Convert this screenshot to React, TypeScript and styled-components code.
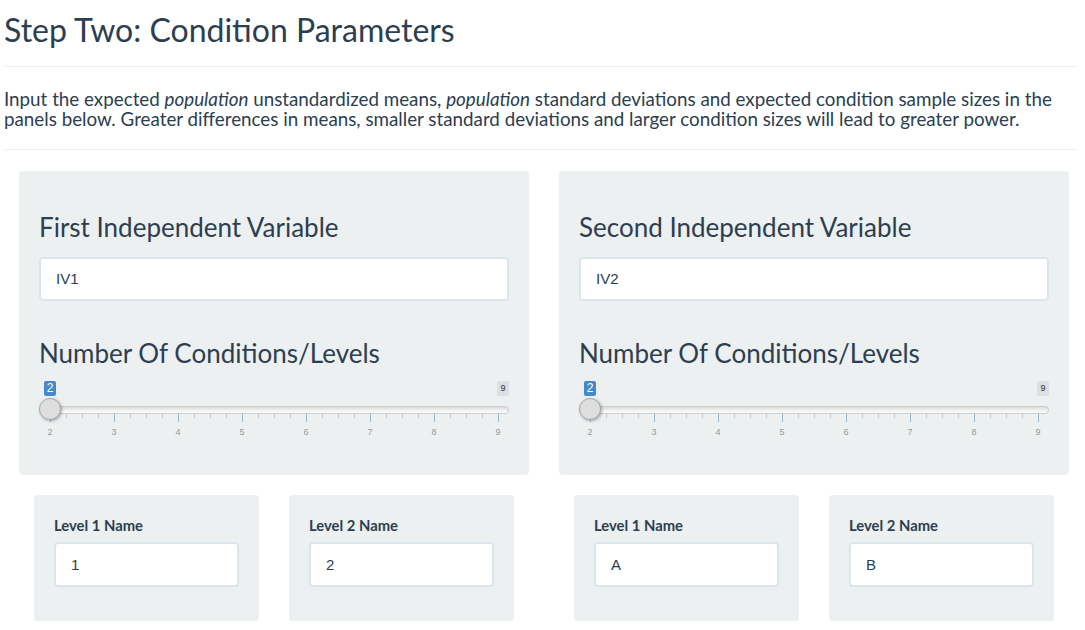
import React from 'react';
import styled, { createGlobalStyle } from 'styled-components';

const GlobalStyle = createGlobalStyle`
  html, body {
    margin: 0;
    padding: 0;
    background: #ffffff;
    color: #2c3e50;
    font-family: Lato, "Open Sans", sans-serif;
  }
`;

const Page = styled.div`
  padding: 0 4px;
  width: 1081px;
  box-sizing: border-box;
`;

const Title = styled.h2`
  margin: 0;
  padding-top: 12px;
  font-size: 32px;
  font-weight: 400;
  line-height: 1.1;
`;

const Rule = styled.hr<{ $top: number }>`
  margin: ${(p) => p.$top}px 0 0;
  border: 0;
  border-top: 1px solid #eeeeee;
`;

const Intro = styled.p`
  margin: 22px 0 0;
  font-size: 18.8px;
  line-height: 20px;
`;

const Columns = styled.div`
  display: grid;
  grid-template-columns: 510px 510px;
  gap: 30px;
  margin: 21px 0 0 15px;
`;

const Column = styled.div`
  display: flex;
  flex-direction: column;
`;

const Well = styled.div`
  background: #ecf0f1;
  border-radius: 4px;
  padding: 42px 20px 35px;
  height: 304px;
  box-sizing: border-box;
`;

const PanelHeading = styled.h3<{ $top?: number }>`
  margin: ${(p) => p.$top ?? 0}px 0 0;
  font-size: 26px;
  font-weight: 400;
  line-height: 1.1;
`;

const TextInput = styled.input<{ $height: number }>`
  display: block;
  width: 100%;
  height: ${(p) => p.$height}px;
  box-sizing: border-box;
  margin-top: 15px;
  padding: 0 15px;
  border: 2px solid #dce4ec;
  border-radius: 4px;
  background: #ffffff;
  color: #2c3e50;
  font-family: "Liberation Sans", Arial, sans-serif;
  font-size: 15px;
  outline: none;
`;

const Slider = styled.div`
  position: relative;
  height: 60px;
  margin-top: 14px;
`;

const Badge = styled.span<{ $max?: boolean }>`
  position: absolute;
  top: 0;
  ${(p) => (p.$max ? 'right: 0;' : 'left: 5px;')}
  width: 12px;
  height: 15px;
  border-radius: 2px;
  background: ${(p) => (p.$max ? '#dcdfe3' : '#428bca')};
  color: ${(p) => (p.$max ? '#333333' : '#ffffff')};
  font-family: "Liberation Sans", Arial, sans-serif;
  font-size: ${(p) => (p.$max ? '9px' : '12px')};
  line-height: 15px;
  text-align: center;
`;

const Track = styled.div`
  position: absolute;
  top: 25px;
  left: 0;
  right: 0;
  height: 8px;
  box-sizing: border-box;
  border: 1px solid #cccccc;
  border-radius: 4px;
  background: linear-gradient(to bottom, #dddddd, #ffffff);
`;

const Handle = styled.div`
  position: absolute;
  top: 17px;
  left: 0;
  width: 22px;
  height: 22px;
  box-sizing: border-box;
  border-radius: 50%;
  border: 1px solid #aaaaaa;
  background: #dedede;
  box-shadow: 1px 1px 3px rgba(0, 0, 0, 0.3);
`;

const Tick = styled.span<{ $major: boolean }>`
  position: absolute;
  top: 33px;
  width: 1px;
  height: ${(p) => (p.$major ? 8 : 4)}px;
  background: ${(p) => (p.$major ? '#9fb6cc' : '#c7c7c7')};
`;

const TickLabel = styled.span`
  position: absolute;
  top: 45px;
  width: 20px;
  margin-left: -10px;
  text-align: center;
  color: #999999;
  font-family: "Liberation Sans", Arial, sans-serif;
  font-size: 9px;
  line-height: 12px;
`;

const LevelRow = styled.div`
  display: grid;
  grid-template-columns: 225px 225px;
  gap: 30px;
  padding: 0 15px;
  margin-top: 20px;
`;

const SmallWell = styled.div`
  background: #ecf0f1;
  border-radius: 4px;
  padding: 21px 20px 35px;
  height: 126px;
  box-sizing: border-box;
`;

const FieldLabel = styled.label`
  display: block;
  font-size: 14.8px;
  font-weight: 700;
  line-height: 18px;
`;

const LevelInput = styled(TextInput)`
  margin-top: 8px;
`;

const values = [2, 3, 4, 5, 6, 7, 8, 9];
const START = 10.5;
const STEP = 64;

const RangeSlider = () => {
  const ticks: { x: number; major: boolean }[] = [];
  values.forEach((_, i) => {
    ticks.push({ x: START + i * STEP, major: true });
    if (i < values.length - 1) {
      for (let m = 1; m < 4; m++) ticks.push({ x: START + i * STEP + m * 16, major: false });
    }
  });
  return (
    <Slider>
      <Badge>2</Badge>
      <Badge $max>9</Badge>
      <Track />
      {ticks.map((t, i) => (
        <Tick key={i} $major={t.major} style={{ left: t.x }} />
      ))}
      {values.map((v, i) => (
        <TickLabel key={v} style={{ left: START + i * STEP + 0.5 }}>
          {v}
        </TickLabel>
      ))}
      <Handle />
    </Slider>
  );
};

const IVPanel = ({ title, name, levels }: { title: string; name: string; levels: string[] }) => (
  <Column>
    <Well>
      <PanelHeading>{title}</PanelHeading>
      <TextInput $height={44} defaultValue={name} />
      <PanelHeading $top={38}>Number Of Conditions/Levels</PanelHeading>
      <RangeSlider />
    </Well>
    <LevelRow>
      {levels.map((lv, i) => (
        <SmallWell key={i}>
          <FieldLabel>Level {i + 1} Name</FieldLabel>
          <LevelInput $height={45} defaultValue={lv} />
        </SmallWell>
      ))}
    </LevelRow>
  </Column>
);

export default function App() {
  return (
    <>
      <GlobalStyle />
      <Page>
        <Title>Step Two: Condition Parameters</Title>
        <Rule $top={19} />
        <Intro>
          Input the expected <em>population</em> unstandardized means, <em>population</em> standard
          deviations and expected condition sample sizes in the panels below. Greater differences in
          means, smaller standard deviations and larger condition sizes will lead to greater power.
        </Intro>
        <Rule $top={20} />
        <Columns>
          <IVPanel title="First Independent Variable" name="IV1" levels={['1', '2']} />
          <IVPanel title="Second Independent Variable" name="IV2" levels={['A', 'B']} />
        </Columns>
      </Page>
    </>
  );
}
